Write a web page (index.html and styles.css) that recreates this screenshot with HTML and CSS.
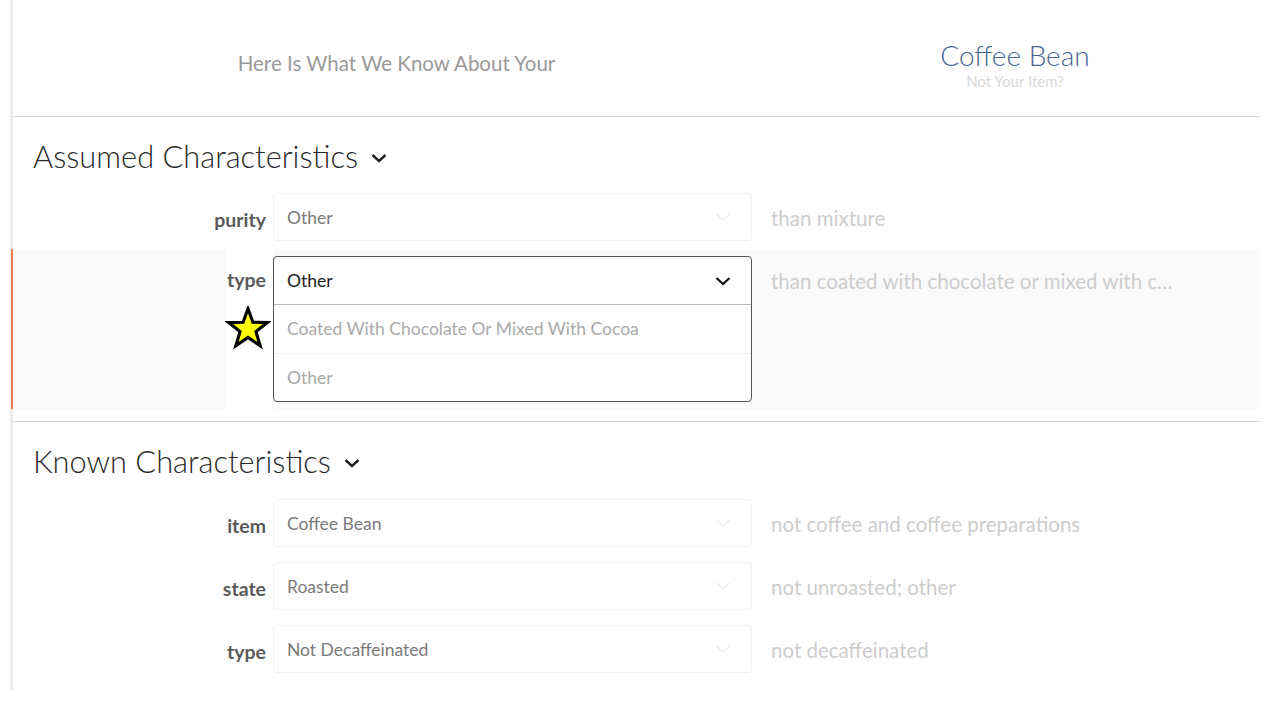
FILE: index.html
```html
<!DOCTYPE html>
<html>
<head>
<meta charset="utf-8">
<link rel="stylesheet" href="styles.css">
</head>
<body>
<div class="page">
  <header class="head">
    <div class="head-left">Here Is What We Know About Your</div>
    <div class="head-right">
      <div class="item-name">Coffee Bean</div>
      <div class="item-alt">Not Your Item?</div>
    </div>
  </header>

  <section class="section">
    <h2 class="sec-title">Assumed Characteristics
      <svg class="sec-chev" width="18" height="18" viewBox="0 0 18 18"><polyline points="2.5,6 9,12 15.5,6" fill="none" stroke="#222" stroke-width="2.4"/></svg>
    </h2>
    <div class="row">
      <div class="label"><span>purity</span></div>
      <div class="select">
        <span class="val">Other</span>
        <svg class="chev" width="16" height="16" viewBox="0 0 16 16"><polyline points="1.5,5 8,11 14.5,5" fill="none" stroke="#eee" stroke-width="1.5"/></svg>
      </div>
      <div class="hint">than mixture</div>
    </div>
    <div class="row active">
      <div class="label"><span>type</span>
        <svg class="star" width="46" height="44" viewBox="0 0 44 42"><polygon points="22,2.5 26.7,15.5 40.5,15.8 29.6,24.4 33.6,38 22,30 10.4,38 14.4,24.4 3.5,15.8 17.3,15.5" fill="#ffff00" stroke="#000" stroke-width="3" stroke-linejoin="miter"/></svg>
      </div>
      <div class="select open">
        <div class="sel-head">
          <span class="val">Other</span>
          <svg class="chev" width="16" height="16" viewBox="0 0 16 16"><polyline points="1.5,5 8,11 14.5,5" fill="none" stroke="#111" stroke-width="2.2"/></svg>
        </div>
        <div class="opt">Coated With Chocolate Or Mixed With Cocoa</div>
        <div class="opt">Other</div>
      </div>
      <div class="hint">than coated with chocolate or mixed with cocoa or other</div>
    </div>
  </section>

  <section class="section known">
    <h2 class="sec-title">Known Characteristics
      <svg class="sec-chev" width="18" height="18" viewBox="0 0 18 18"><polyline points="2.5,6 9,12 15.5,6" fill="none" stroke="#222" stroke-width="2.4"/></svg>
    </h2>
    <div class="row">
      <div class="label"><span>item</span></div>
      <div class="select">
        <span class="val">Coffee Bean</span>
        <svg class="chev" width="16" height="16" viewBox="0 0 16 16"><polyline points="1.5,5 8,11 14.5,5" fill="none" stroke="#eee" stroke-width="1.5"/></svg>
      </div>
      <div class="hint">not coffee and coffee preparations</div>
    </div>
    <div class="row">
      <div class="label"><span>state</span></div>
      <div class="select">
        <span class="val">Roasted</span>
        <svg class="chev" width="16" height="16" viewBox="0 0 16 16"><polyline points="1.5,5 8,11 14.5,5" fill="none" stroke="#eee" stroke-width="1.5"/></svg>
      </div>
      <div class="hint">not unroasted; other</div>
    </div>
    <div class="row">
      <div class="label"><span>type</span></div>
      <div class="select">
        <span class="val">Not Decaffeinated</span>
        <svg class="chev" width="16" height="16" viewBox="0 0 16 16"><polyline points="1.5,5 8,11 14.5,5" fill="none" stroke="#eee" stroke-width="1.5"/></svg>
      </div>
      <div class="hint">not decaffeinated</div>
    </div>
  </section>
</div>
</body>
</html>
```

FILE: styles.css
```css
html, body {
  margin: 0;
  padding: 0;
  background: #fff;
  font-family: Lato, "Open Sans", "Liberation Sans", sans-serif;
}

.page {
  margin-left: 10px;
  width: 1247px;
  border-left: 3px solid #ebebeb;
  height: 690px;
}

.head {
  display: flex;
  height: 116px;
  border-bottom: 1px solid #d4d4d4;
}

.head-left {
  width: 767px;
  text-align: center;
  padding-top: 51px;
  font-size: 20.5px;
  line-height: 24px;
  color: #9a9a9a;
}

.head-right {
  width: 470px;
  text-align: center;
  padding-top: 38px;
}

.item-name {
  font-size: 28px;
  line-height: 34px;
  font-weight: 300;
  color: #4a6492;
}

.item-alt {
  font-size: 15px;
  line-height: 18px;
  color: #d8d8d8;
}

.section {
  border-bottom: 1px solid #d4d4d4;
  padding-bottom: 12px;
}

.section:last-child {
  border-bottom: none;
}

.sec-title {
  margin: 0;
  padding: 20px 0 9px 20px;
  font-size: 30.8px;
  line-height: 40px;
  font-weight: 300;
  color: #2a2a2a;
  display: flex;
  align-items: center;
  gap: 12px;
}

.known .sec-title {
  padding-bottom: 10px;
}

.sec-chev {
  margin-top: 2px;
}

.row {
  display: grid;
  grid-template-columns: 260px 479px 1fr;
  padding: 7px 0;
  align-items: start;
}

.known .row {
  padding-bottom: 8px;
}

.row.active {
  background: #fafafa;
  border-left: 2px solid #f07a58;
  margin-left: -2px;
  margin-top: 1px;
}

.label {
  position: relative;
  display: flex;
  justify-content: flex-end;
  padding-right: 7px;
  height: 48px;
  align-items: center;
}

.label span {
  font-size: 19.5px;
  font-weight: 700;
  color: #5a5a5a;
  padding-top: 4px;
}

.row.active .label {
  align-items: flex-start;
  margin-top: -7px;
  padding-top: 7px;
  height: 153px;
  margin-bottom: -7px;
  background: linear-gradient(to right, transparent 212px, #fff 212px);
}

.row.active .label span {
  padding-top: 12px;
}

.star {
  position: absolute;
  right: 2px;
  top: 57px;
}

.select {
  box-sizing: border-box;
  height: 48px;
  border: 1px solid #f2f2f2;
  border-radius: 4px;
  background: #fff;
  display: flex;
  align-items: center;
  justify-content: space-between;
  padding: 0 20px 0 13px;
}

.val {
  font-size: 17.5px;
  color: #7a7a7a;
}

.select.open {
  height: 146px;
  display: block;
  padding: 0;
  border: 1px solid #555;
}

.sel-head {
  height: 47px;
  display: flex;
  align-items: center;
  justify-content: space-between;
  padding: 0 20px 0 13px;
  border-bottom: 1px solid #bbb;
}

.sel-head .val {
  color: #222;
}

.opt {
  height: 48px;
  line-height: 48px;
  padding-left: 13px;
  font-size: 17.5px;
  color: #aaa;
  border-bottom: 1px solid #eee;
}

.opt:last-child {
  border-bottom: none;
}

.hint {
  padding-left: 19px;
  font-size: 20.5px;
  line-height: 48px;
  padding-top: 1px;
  height: 47px;
  color: #cdcdcd;
  white-space: nowrap;
  overflow: hidden;
  text-overflow: ellipsis;
  max-width: 410px;
}
```
